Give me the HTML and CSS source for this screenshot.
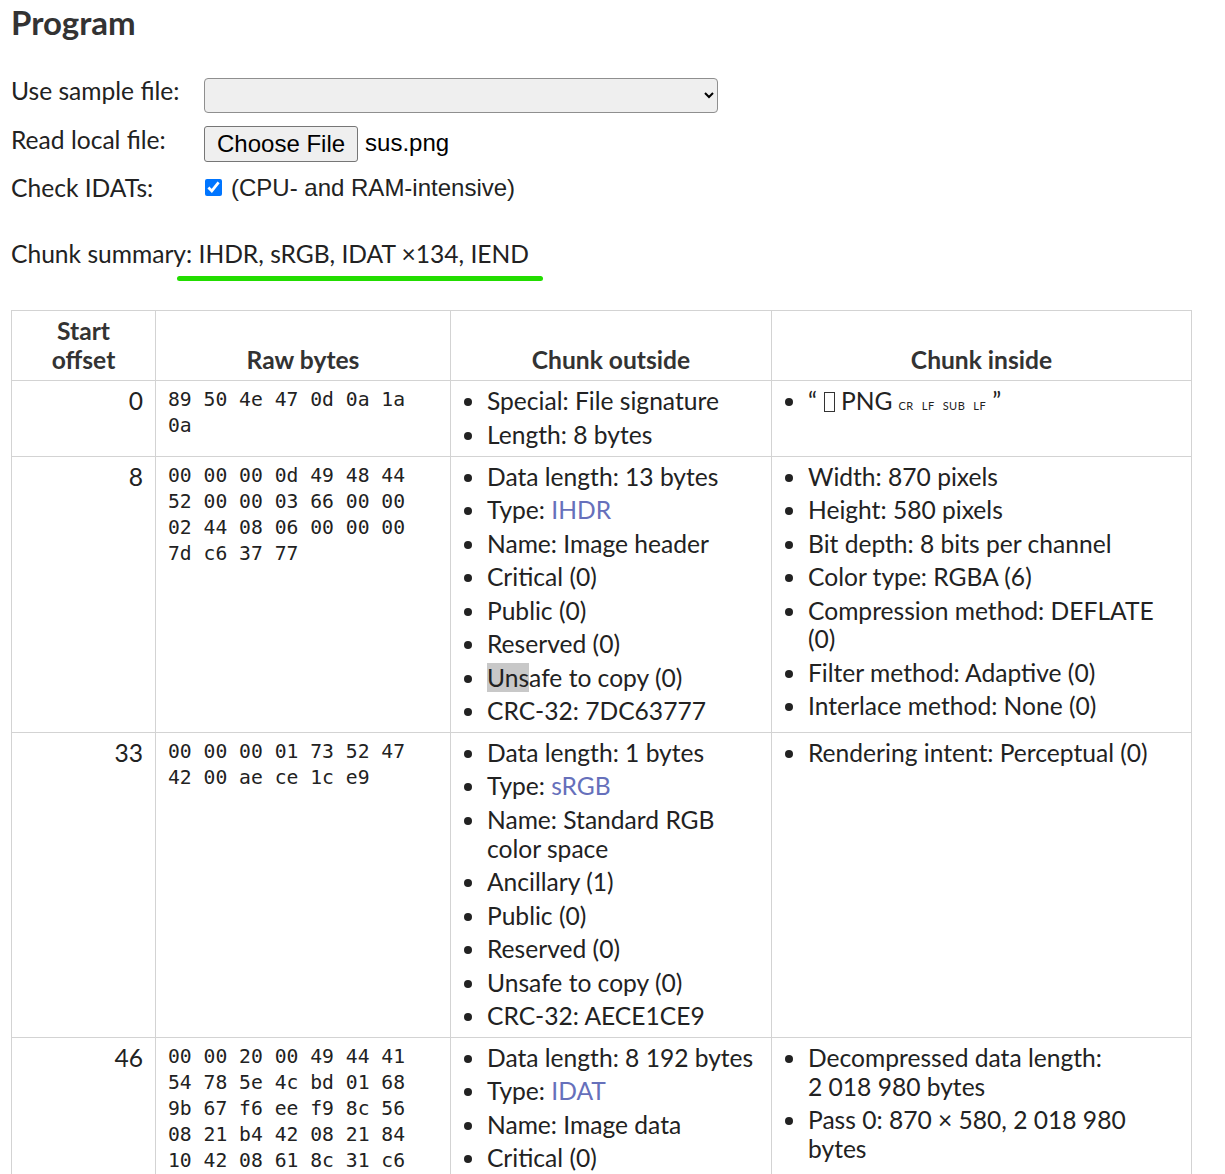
FILE: index.html
```html
<!DOCTYPE html>
<html lang="en">
<head>
<meta charset="utf-8">
<title>PNG file chunk inspector</title>
<link rel="stylesheet" href="styles.css">
</head>
<body>
<h2 class="title">Program</h2>

<div class="form">
  <span class="form-label">Use sample file:</span>
  <div class="form-control"><select class="sample-select"><option></option></select></div>

  <span class="form-label">Read local file:</span>
  <div class="form-control file-input"><button class="file-btn" type="button">Choose File</button><span class="file-name">sus.png</span></div>

  <span class="form-label">Check IDATs:</span>
  <label class="form-control check-label"><input class="check" type="checkbox" checked>(CPU- and RAM-intensive)</label>
</div>

<p class="summary">Chunk summary: <span class="summary-value">IHDR, sRGB, IDAT ×134, IEND</span></p>

<table class="chunks">
  <colgroup>
    <col class="c-offset"><col class="c-raw"><col class="c-out"><col class="c-in">
  </colgroup>
  <thead>
    <tr><th>Start offset</th><th>Raw bytes</th><th>Chunk outside</th><th>Chunk inside</th></tr>
  </thead>
  <tbody>
    <tr>
      <td class="offset">0</td>
      <td class="raw">89 50 4e 47 0d 0a 1a 0a</td>
      <td><ul><li>Special: File signature</li><li>Length: 8 bytes</li></ul></td>
      <td><ul><li>“<span class="tofu"></span>PNG<span class="ctrl">CR</span><span class="ctrl">LF</span><span class="ctrl">SUB</span><span class="ctrl">LF</span>”</li></ul></td>
    </tr>
    <tr>
      <td class="offset">8</td>
      <td class="raw">00 00 00 0d 49 48 44 52 00 00 03 66 00 00 02 44 08 06 00 00 00 7d c6 37 77</td>
      <td><ul>
        <li>Data length: 13 bytes</li>
        <li>Type: <a class="type">IHDR</a></li>
        <li>Name: Image header</li>
        <li>Critical (0)</li>
        <li>Public (0)</li>
        <li>Reserved (0)</li>
        <li><span class="sel">Uns</span>afe to copy (0)</li>
        <li>CRC-32: 7DC63777</li>
      </ul></td>
      <td><ul>
        <li>Width: 870 pixels</li>
        <li>Height: 580 pixels</li>
        <li>Bit depth: 8 bits per channel</li>
        <li>Color type: RGBA (6)</li>
        <li>Compression method: DEFLATE (0)</li>
        <li>Filter method: Adaptive (0)</li>
        <li>Interlace method: None (0)</li>
      </ul></td>
    </tr>
    <tr>
      <td class="offset">33</td>
      <td class="raw">00 00 00 01 73 52 47 42 00 ae ce 1c e9</td>
      <td><ul>
        <li>Data length: 1 bytes</li>
        <li>Type: <a class="type">sRGB</a></li>
        <li>Name: Standard RGB color space</li>
        <li>Ancillary (1)</li>
        <li>Public (0)</li>
        <li>Reserved (0)</li>
        <li>Unsafe to copy (0)</li>
        <li>CRC-32: AECE1CE9</li>
      </ul></td>
      <td><ul>
        <li>Rendering intent: Perceptual (0)</li>
      </ul></td>
    </tr>
    <tr>
      <td class="offset">46</td>
      <td class="raw">00 00 20 00 49 44 41 54 78 5e 4c bd 01 68 9b 67 f6 ee f9 8c 56 08 21 b4 42 08 21 84 10 42 08 61 8c 31 c6</td>
      <td><ul>
        <li>Data length: 8&nbsp;192 bytes</li>
        <li>Type: <a class="type">IDAT</a></li>
        <li>Name: Image data</li>
        <li>Critical (0)</li>
        <li>Public (0)</li>
        <li>Reserved (0)</li>
        <li>Unsafe to copy (0)</li>
        <li>CRC-32: 5E1C0B3A</li>
      </ul></td>
      <td><ul>
        <li>Decompressed data length: 2&nbsp;018&nbsp;980 bytes</li>
        <li>Pass 0: 870 × 580, 2&nbsp;018&nbsp;980 bytes</li>
      </ul></td>
    </tr>
  </tbody>
</table>
</body>
</html>
```
FILE: styles.css
```css
html, body {
  background: #ffffff;
}
body {
  margin: 0 0 0 11px;
  padding: 0;
  font-family: Lato, "Noto Sans", sans-serif;
  font-size: 24.6px;
  line-height: 28.8px;
  color: #222222;
}

.title {
  margin: 0;
  padding-top: 2px;
  font-size: 33px;
  line-height: 40px;
  font-weight: bold;
  color: #333333;
}

.form {
  margin-top: 34.6px;
  display: grid;
  grid-template-columns: 193px 1fr;
  grid-template-rows: 49px 48px auto;
  align-items: start;
}
.form-label {
  line-height: 28.8px;
}
.form-control {
  display: flex;
  align-items: center;
}
.sample-select {
  margin-top: 1.4px;
  width: 514px;
  height: 35px;
  background: #efefef;
  border: 1px solid #8f8f8f;
  border-radius: 4px;
  font-family: "Liberation Sans", Arial, sans-serif;
  font-size: 20px;
}
.file-input {
  font-family: "Liberation Sans", Arial, sans-serif;
  font-size: 24px;
  gap: 7px;
}
.file-btn {
  font-family: "Liberation Sans", Arial, sans-serif;
  font-size: 24px;
  height: 36px;
  padding: 0 12px;
  background: #efefef;
  border: 1px solid #767676;
  border-radius: 3px;
  color: #000;
}
.file-name {
  color: #000;
}
.check-label {
  font-family: "Liberation Sans", Arial, sans-serif;
  font-size: 24px;
  line-height: 28.8px;
  color: #222;
}
.check {
  width: 17px;
  height: 17px;
  margin: 0 9px 0 1px;
  accent-color: #0075ff;
}

.summary {
  margin: 38px 0 0;
  position: relative;
}
.summary::after {
  content: "";
  position: absolute;
  left: 166px;
  width: 366px;
  top: 36px;
  height: 5px;
  border-radius: 3px;
  background: #22dd00;
}

.chunks {
  margin-top: 40.6px;
  border-collapse: collapse;
  table-layout: fixed;
  width: 1180px;
}
.c-offset { width: 144px; }
.c-raw { width: 295px; }
.c-out { width: 321px; }
.c-in { width: 420px; }

.chunks th,
.chunks td {
  border: 1px solid #d3d3d3;
  padding: 6px 12px;
}
.chunks th {
  vertical-align: bottom;
  text-align: center;
  font-weight: bold;
  color: #333333;
}
.chunks td {
  vertical-align: top;
}
.chunks td.offset {
  text-align: right;
}
.chunks td.raw {
  font-family: "DejaVu Sans Mono", monospace;
  font-size: 19.7px;
  line-height: 26px;
}
.chunks ul {
  margin: 0;
  padding-left: 24px;
}
.chunks li + li {
  margin-top: 4.7px;
}
.type {
  color: #6670bb;
  text-decoration: none;
}
.sel {
  background: #c8c8c8;
}
.tofu {
  display: inline-block;
  width: 11px;
  height: 20px;
  border: 1.5px solid #333;
  box-sizing: border-box;
  margin: 0 6px 0 7px;
  vertical-align: -2px;
}
.ctrl {
  font-size: 11px;
  margin-left: 6px;
  letter-spacing: 0.5px;
}
.ctrl + .ctrl {
  margin-left: 8px;
}
.ctrl:last-child {
  margin-right: 6px;
}
```
